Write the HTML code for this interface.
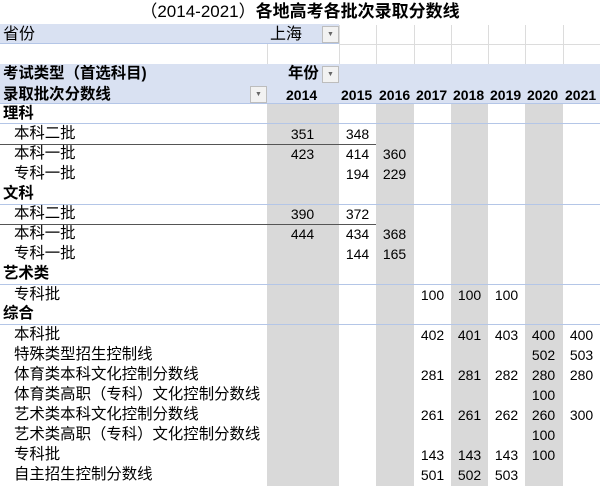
<!DOCTYPE html>
<html><head><meta charset="utf-8"><style>
*{margin:0;padding:0;box-sizing:border-box}
body{width:600px;height:486px;background:#fff;position:relative;overflow:hidden;font-family:"Liberation Sans","Noto Sans CJK SC",sans-serif;font-size:15.4px;color:#000}
.a{position:absolute;white-space:nowrap}
.g{position:absolute;background:#d9d9d9;top:104px;height:382px}
.vl{position:absolute;width:1px;background:#dcdcdc}
.hl{position:absolute;height:1px}
.n{position:absolute;width:37px;text-align:center;font-size:14px;line-height:20px;font-family:"Liberation Sans","DejaVu Sans",sans-serif}
.l{position:absolute;left:14px;line-height:20px;white-space:nowrap}
.c{position:absolute;left:3px;line-height:20px;font-weight:bold;white-space:nowrap}
.btn{position:absolute;width:17px;height:17px;background:#f2f2f2;border:1px solid #bdbdbd;font-size:7px;color:#666;text-align:center;line-height:15px}
</style></head><body>
<div class="a" style="left:0;top:0;width:600px;text-align:center;font-size:17px;line-height:24px"><span style="font-weight:normal">（2014-2021）</span><b>各地高考各批次录取分数线</b></div>
<div class="a" style="left:0;top:24px;width:339px;height:20px;background:#d9e1f2;border-bottom:1px solid #b4c6e7"></div>
<div class="a" style="left:3px;top:25px;font-size:16px;line-height:20px">省份</div>
<div class="a" style="left:270px;top:25px;font-size:16px;line-height:20px">上海</div>
<div class="btn" style="left:322px;top:26px">▼</div>
<div class="a" style="left:0;top:64px;width:600px;height:40px;background:#d9e1f2;border-bottom:1px solid #b4c6e7"></div>
<div class="vl" style="left:267px;top:44px;height:20px"></div>
<div class="vl" style="left:339px;top:25px;height:39px"></div>
<div class="vl" style="left:376px;top:25px;height:39px"></div>
<div class="vl" style="left:414px;top:25px;height:39px"></div>
<div class="vl" style="left:451px;top:25px;height:39px"></div>
<div class="vl" style="left:488px;top:25px;height:39px"></div>
<div class="vl" style="left:525px;top:25px;height:39px"></div>
<div class="vl" style="left:563px;top:25px;height:39px"></div>
<div class="hl" style="left:339px;top:44px;width:261px;background:#dcdcdc"></div>
<div class="c" style="top:64px;font-size:15.4px">考试类型（首选科目)</div>
<div class="c" style="top:85px;font-size:15.4px">录取批次分数线</div>
<div class="a" style="left:288px;top:64px;font-weight:bold;font-size:15.4px;line-height:20px">年份</div>
<div class="btn" style="left:322px;top:66px">▼</div>
<div class="btn" style="left:250px;top:86px">▼</div>
<div class="g" style="left:267px;width:72px"></div>
<div class="g" style="left:376px;width:38px"></div>
<div class="g" style="left:451px;width:37px"></div>
<div class="g" style="left:525px;width:38px"></div>
<div style="position:absolute;top:84px;font-weight:bold;font-size:14px;line-height:22px">
<span class="a" style="left:286px">2014</span><span class="a" style="left:341px">2015</span><span class="a" style="left:379px">2016</span><span class="a" style="left:416px">2017</span><span class="a" style="left:453px">2018</span><span class="a" style="left:490px">2019</span><span class="a" style="left:527px">2020</span><span class="a" style="left:565px">2021</span></div>
<div class="hl" style="left:0;top:123px;width:600px;background:#b4c6e7"></div>
<div class="hl" style="left:0;top:144px;width:376px;background:#555"></div>
<div class="hl" style="left:0;top:204px;width:600px;background:#b4c6e7"></div>
<div class="hl" style="left:0;top:224px;width:376px;background:#555"></div>
<div class="hl" style="left:0;top:284px;width:600px;background:#b4c6e7"></div>
<div class="hl" style="left:0;top:324px;width:600px;background:#b4c6e7"></div>
<div class="c" style="top:104px">理科</div>
<div class="l" style="top:124px">本科二批</div><div class="n" style="left:284px;top:124px">351</div><div class="n" style="left:339px;top:124px">348</div>
<div class="l" style="top:144px">本科一批</div><div class="n" style="left:284px;top:144px">423</div><div class="n" style="left:339px;top:144px">414</div><div class="n" style="left:376px;top:144px">360</div>
<div class="l" style="top:164px">专科一批</div><div class="n" style="left:339px;top:164px">194</div><div class="n" style="left:376px;top:164px">229</div>
<div class="c" style="top:184px">文科</div>
<div class="l" style="top:204px">本科二批</div><div class="n" style="left:284px;top:204px">390</div><div class="n" style="left:339px;top:204px">372</div>
<div class="l" style="top:224px">本科一批</div><div class="n" style="left:284px;top:224px">444</div><div class="n" style="left:339px;top:224px">434</div><div class="n" style="left:376px;top:224px">368</div>
<div class="l" style="top:244px">专科一批</div><div class="n" style="left:339px;top:244px">144</div><div class="n" style="left:376px;top:244px">165</div>
<div class="c" style="top:264px">艺术类</div>
<div class="l" style="top:285px">专科批</div><div class="n" style="left:414px;top:285px">100</div><div class="n" style="left:451px;top:285px">100</div><div class="n" style="left:488px;top:285px">100</div>
<div class="c" style="top:304px">综合</div>
<div class="l" style="top:325px">本科批</div><div class="n" style="left:414px;top:325px">402</div><div class="n" style="left:451px;top:325px">401</div><div class="n" style="left:488px;top:325px">403</div><div class="n" style="left:525px;top:325px">400</div><div class="n" style="left:563px;top:325px">400</div>
<div class="l" style="top:345px">特殊类型招生控制线</div><div class="n" style="left:525px;top:345px">502</div><div class="n" style="left:563px;top:345px">503</div>
<div class="l" style="top:365px">体育类本科文化控制分数线</div><div class="n" style="left:414px;top:365px">281</div><div class="n" style="left:451px;top:365px">281</div><div class="n" style="left:488px;top:365px">282</div><div class="n" style="left:525px;top:365px">280</div><div class="n" style="left:563px;top:365px">280</div>
<div class="l" style="top:385px">体育类高职（专科）文化控制分数线</div><div class="n" style="left:525px;top:385px">100</div>
<div class="l" style="top:405px">艺术类本科文化控制分数线</div><div class="n" style="left:414px;top:405px">261</div><div class="n" style="left:451px;top:405px">261</div><div class="n" style="left:488px;top:405px">262</div><div class="n" style="left:525px;top:405px">260</div><div class="n" style="left:563px;top:405px">300</div>
<div class="l" style="top:425px">艺术类高职（专科）文化控制分数线</div><div class="n" style="left:525px;top:425px">100</div>
<div class="l" style="top:445px">专科批</div><div class="n" style="left:414px;top:445px">143</div><div class="n" style="left:451px;top:445px">143</div><div class="n" style="left:488px;top:445px">143</div><div class="n" style="left:525px;top:445px">100</div>
<div class="l" style="top:465px">自主招生控制分数线</div><div class="n" style="left:414px;top:465px">501</div><div class="n" style="left:451px;top:465px">502</div><div class="n" style="left:488px;top:465px">503</div>
</body></html>
